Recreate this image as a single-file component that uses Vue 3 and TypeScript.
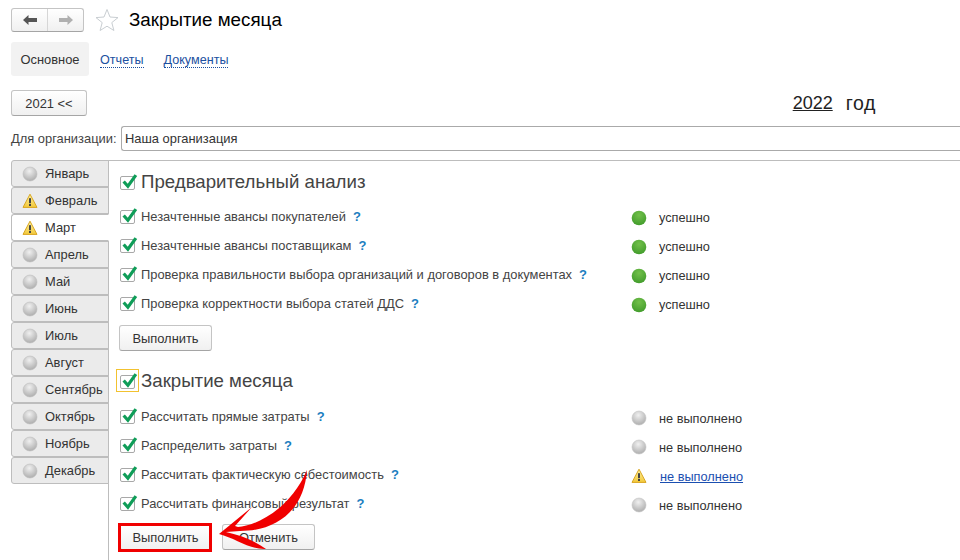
<script setup lang="ts">
type Status = 'ok' | 'none' | 'warn'
interface Row { label: string; status: Status; text: string; link?: boolean }

const months: { name: string; icon: 'grey' | 'warn'; active?: boolean }[] = [
  { name: 'Январь', icon: 'grey' },
  { name: 'Февраль', icon: 'warn' },
  { name: 'Март', icon: 'warn', active: true },
  { name: 'Апрель', icon: 'grey' },
  { name: 'Май', icon: 'grey' },
  { name: 'Июнь', icon: 'grey' },
  { name: 'Июль', icon: 'grey' },
  { name: 'Август', icon: 'grey' },
  { name: 'Сентябрь', icon: 'grey' },
  { name: 'Октябрь', icon: 'grey' },
  { name: 'Ноябрь', icon: 'grey' },
  { name: 'Декабрь', icon: 'grey' }
]

const analysis: Row[] = [
  { label: 'Незачтенные авансы покупателей', status: 'ok', text: 'успешно' },
  { label: 'Незачтенные авансы поставщикам', status: 'ok', text: 'успешно' },
  { label: 'Проверка правильности выбора организаций и договоров в документах', status: 'ok', text: 'успешно' },
  { label: 'Проверка корректности выбора статей ДДС', status: 'ok', text: 'успешно' }
]

const closing: Row[] = [
  { label: 'Рассчитать прямые затраты', status: 'none', text: 'не выполнено' },
  { label: 'Распределить затраты', status: 'none', text: 'не выполнено' },
  { label: 'Рассчитать фактическую себестоимость', status: 'warn', text: 'не выполнено', link: true },
  { label: 'Рассчитать финансовый результат', status: 'none', text: 'не выполнено' }
]

const sections = [
  { title: 'Предварительный анализ', rows: analysis, cancel: false, focus: false },
  { title: 'Закрытие месяца', rows: closing, cancel: true, focus: true }
]
</script>

<template>
  <div class="page">
    <svg width="0" height="0" class="defs">
      <defs>
        <radialGradient id="greyDot" cx="45%" cy="30%" r="75%">
          <stop offset="0" stop-color="#f0f0f0" />
          <stop offset="1" stop-color="#a9a9a9" />
        </radialGradient>
        <radialGradient id="greenDot" cx="50%" cy="30%" r="75%">
          <stop offset="0" stop-color="#72c04a" />
          <stop offset="1" stop-color="#3f9a2a" />
        </radialGradient>
        <linearGradient id="warnFill" x1="0" y1="0" x2="0" y2="1">
          <stop offset="0" stop-color="#fff3a0" />
          <stop offset="1" stop-color="#f2c83a" />
        </linearGradient>
      </defs>
    </svg>

    <header class="top">
      <div class="nav">
        <button class="nav-btn">
          <svg width="16" height="12" viewBox="0 0 16 12"><path d="M1 6 L6.5 1 V4 H15 V8 H6.5 V11 Z" fill="#555" /></svg>
        </button>
        <button class="nav-btn">
          <svg width="16" height="12" viewBox="0 0 16 12"><path d="M15 6 L9.5 1 V4 H1 V8 H9.5 V11 Z" fill="#b0b0b0" /></svg>
        </button>
      </div>
      <svg class="star" width="24" height="24" viewBox="0 0 24 24">
        <path d="M12 1.5 L15 9 L23 9.6 L16.8 14.6 L18.9 22.5 L12 18.2 L5.1 22.5 L7.2 14.6 L1 9.6 L9 9 Z" fill="#fff" stroke="#c9ced2" stroke-width="1" />
      </svg>
      <h1 class="title">Закрытие месяца</h1>
    </header>

    <nav class="tabs">
      <span class="tab-active">Основное</span>
      <a class="tab-link">Отчеты</a>
      <a class="tab-link">Документы</a>
    </nav>

    <div class="year-row">
      <button class="btn year-btn">2021 &lt;&lt;</button>
      <div class="year"><u>2022</u><span class="year-word">год</span></div>
    </div>

    <div class="org">
      <label>Для организации:</label>
      <div class="org-input">Наша организация</div>
    </div>

    <div class="main">
      <aside class="months">
        <div v-for="m in months" :key="m.name" class="month" :class="{ active: m.active }">
          <svg v-if="m.icon === 'grey'" width="16" height="16" viewBox="0 0 16 16"><circle cx="8" cy="8" r="7" fill="url(#greyDot)" stroke="#bdbdbd" stroke-width="0.6" /></svg>
          <svg v-else width="16" height="16" viewBox="0 0 16 16">
            <path d="M8 1.2 L15 14.4 H1 Z" fill="url(#warnFill)" stroke="#d9a520" stroke-width="1" stroke-linejoin="round" />
            <rect x="7" y="5.2" width="2" height="5" fill="#444" />
            <rect x="7" y="11" width="2" height="2" fill="#444" />
          </svg>
          <span>{{ m.name }}</span>
        </div>
      </aside>

      <section class="content">
        <div v-for="s in sections" :key="s.title" class="section" :class="{ second: s.focus }">
          <div class="section-head">
            <span class="check" :class="{ focus: s.focus }">
              <svg width="17" height="17" viewBox="0 0 16 16"><path d="M2.5 7 L6.5 11.5 L14 1" fill="none" stroke="#0f9d58" stroke-width="3" /></svg>
            </span>
            <h2>{{ s.title }}</h2>
          </div>
          <div v-for="r in s.rows" :key="r.label" class="row">
            <div class="row-label">
              <span class="check">
                <svg width="17" height="17" viewBox="0 0 16 16"><path d="M2.5 7 L6.5 11.5 L14 1" fill="none" stroke="#0f9d58" stroke-width="3" /></svg>
              </span>
              <span class="label-text">{{ r.label }}</span>
              <span class="help">?</span>
            </div>
            <div class="row-status">
              <svg v-if="r.status === 'ok'" width="16" height="16" viewBox="0 0 16 16"><circle cx="8" cy="8" r="7.3" fill="url(#greenDot)" /></svg>
              <svg v-else-if="r.status === 'none'" width="16" height="16" viewBox="0 0 16 16"><circle cx="8" cy="8" r="7" fill="url(#greyDot)" stroke="#c4c4c4" stroke-width="0.6" /></svg>
              <svg v-else width="16" height="16" viewBox="0 0 16 16">
                <path d="M8 1.2 L15 14.4 H1 Z" fill="url(#warnFill)" stroke="#d9a520" stroke-width="1" stroke-linejoin="round" />
                <rect x="7" y="5.2" width="2" height="5" fill="#444" />
                <rect x="7" y="11" width="2" height="2" fill="#444" />
              </svg>
              <a v-if="r.link" class="status-link">{{ r.text }}</a>
              <span v-else class="status-text">{{ r.text }}</span>
            </div>
          </div>
          <div class="actions">
            <button class="btn act-btn">Выполнить</button>
            <button v-if="s.cancel" class="btn act-btn">Отменить</button>
          </div>
        </div>
      </section>
    </div>

    <div class="highlight"></div>
    <svg class="arrow" width="960" height="560" viewBox="0 0 960 560">
      <path d="M219 534 L252 507 L235 526 L238 527 C255 526 290 510 307 470 C304 512 275 531 240 531 L226 532 C240 535 255 541 266 549 C250 550 235 538 219 534 Z" fill="#f00000" />
    </svg>
  </div>
</template>

<style>
html, body { margin: 0; background: #fff; }
</style>

<style scoped>
.page {
  position: relative;
  width: 960px;
  height: 560px;
  overflow: hidden;
  box-sizing: border-box;
  padding: 7px 0 0 11px;
  font-family: "Liberation Sans", Arial, sans-serif;
  font-size: 12.9px;
  color: #333;
}
.defs { position: absolute; }
.top { display: flex; align-items: center; height: 25px; }
.nav {
  display: flex;
  width: 73px;
  height: 24px;
  box-sizing: border-box;
  border: 1px solid #c4c4c4;
  border-bottom-color: #a5a5a5;
  border-radius: 3px;
  background: linear-gradient(#fff, #f0f0f0);
}
.nav-btn {
  flex: 1;
  border: 0;
  padding: 0;
  background: none;
  display: flex;
  align-items: center;
  justify-content: center;
}
.nav-btn + .nav-btn { border-left: 1px solid #d6d6d6; }
.star { margin-left: 11px; }
.title { margin: 0 0 0 10px; font-size: 18.8px; font-weight: 400; color: #000; }
.tabs { display: flex; align-items: center; margin-top: 10px; height: 34px; }
.tab-active {
  background: #f2f2f2;
  border-radius: 3px;
  height: 34px;
  width: 78px;
  display: flex;
  align-items: center;
  justify-content: center;
  color: #333;
}
.tab-link {
  margin-left: 11px;
  margin-right: 9px;
  margin-top: 2px;
  font-size: 12.6px;
  color: #1b4fa0;
  line-height: 14px;
  border-bottom: 1px dotted #1b4fa0;
}
.year-row {
  display: flex;
  align-items: center;
  justify-content: space-between;
  margin-top: 14px;
  height: 26px;
}
.btn {
  font: inherit;
  color: #333;
  box-sizing: border-box;
  border: 1px solid #c4c4c4;
  border-bottom-color: #a5a5a5;
  border-radius: 3px;
  background: linear-gradient(#fff, #f0f0f0);
  padding: 0;
}
.year-btn { width: 76px; height: 26px; }
.year {
  font-size: 18px;
  color: #222;
  margin-right: 84px;
  display: flex;
  gap: 13px;
  margin-top: 1px;
}
.year-word { font-size: 19.5px; letter-spacing: 0.6px; line-height: 21px; }
.org { display: flex; align-items: center; margin-top: 10px; height: 25px; }
.org label { width: 110px; color: #444; }
.org-input {
  flex: 1;
  height: 25px;
  box-sizing: border-box;
  border: 1px solid #aaa;
  border-right: 0;
  border-radius: 3px 0 0 3px;
  padding-left: 3px;
  display: flex;
  align-items: center;
  color: #333;
}
.main { display: flex; margin-top: 9px; height: 400px; }
.months { width: 98px; flex: none; position: relative; z-index: 1; }
.month {
  height: 27px;
  box-sizing: border-box;
  display: flex;
  align-items: center;
  gap: 7px;
  padding-left: 10px;
  background: #ebebeb;
  border: 1px solid #bdbdbd;
  border-radius: 3px 0 0 3px;
  color: #333;
}
.month.active {
  background: #fff;
  border-right-color: #fff;
}
.content {
  flex: 1;
  border-left: 1px solid #bdbdbd;
  border-top: 1px solid #bdbdbd;
  margin-left: -1px;
  padding: 12px 0 0 11px;
}
.section.second { margin-top: 21px; }
.section-head { display: flex; align-items: center; height: 19px; }
.section-head h2 {
  margin: -2px 0 0 6px;
  font-size: 18.67px;
  font-weight: 400;
  color: #444;
}
.check {
  position: relative;
  width: 15px;
  height: 14px;
  flex: none;
  box-sizing: border-box;
  border: 1px solid #a8a8a8;
  border-radius: 2px;
  background: #fff;
  display: inline-block;
}
.check svg { position: absolute; left: 0; top: -3px; }
.check.focus::after {
  content: "";
  position: absolute;
  left: -5px;
  top: -7px;
  width: 21px;
  height: 21px;
  border: 1px solid #f2c230;
}
.row { display: flex; align-items: center; height: 29px; }
.section-head + .row { margin-top: 10px; }
.second .section-head + .row { margin-top: 11px; }
.row-label { display: flex; align-items: center; width: 511px; }
.label-text { margin-left: 6px; color: #444; }
.help { margin-left: 7px; color: #1c7ec0; font-weight: 700; font-size: 13px; }
.row-status { display: flex; align-items: center; gap: 12px; margin-top: 2px; font-size: 12.75px; }
.second .row-status { margin-top: 3px; }
.status-text { color: #333; }
.status-link { color: #1b4fb0; text-decoration: underline; margin-left: 1px; }
.actions { display: flex; gap: 10px; margin-top: 7px; margin-left: -1px; }
.second .actions { margin-top: 6px; }
.act-btn { width: 93px; height: 26px; }
.highlight {
  position: absolute;
  left: 118px;
  top: 523px;
  width: 94px;
  height: 29px;
  box-sizing: border-box;
  border: 3px solid #f00000;
}
.arrow { position: absolute; left: 0; top: 0; pointer-events: none; }
</style>
